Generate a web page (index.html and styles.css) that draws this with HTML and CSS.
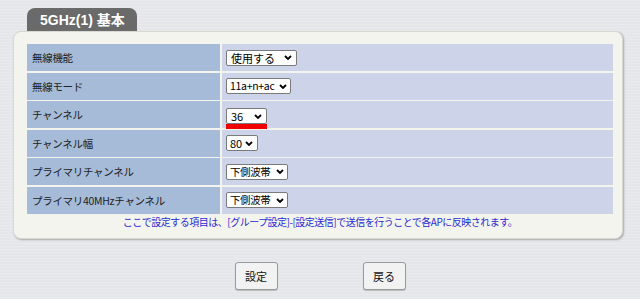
FILE: index.html
```html
<!DOCTYPE html>
<html lang="ja">
<head>
<meta charset="utf-8">
<title>5GHz(1) 基本</title>
<link rel="stylesheet" href="styles.css">
</head>
<body>
<div class="page">
  <div class="tab">5GHz(1) 基本</div>
  <div class="panel">
    <div class="grid">
      <div class="lbl">無線機能</div>
      <div class="val"><span class="sel w71"><span>使用する</span><svg class="chev" viewBox="0 0 8 5" width="8" height="5"><path d="M1 1 L4 4 L7 1" fill="none" stroke="#000" stroke-width="1.8"/></svg></span></div>
      <div class="lbl">無線モード</div>
      <div class="val"><span class="sel w65"><span class="narrow">11a+n+ac</span><svg class="chev" viewBox="0 0 8 5" width="8" height="5"><path d="M1 1 L4 4 L7 1" fill="none" stroke="#000" stroke-width="1.8"/></svg></span></div>
      <div class="lbl">チャンネル</div>
      <div class="val"><span class="stack"><span class="sel w41"><span>36</span><svg class="chev" viewBox="0 0 8 5" width="8" height="5"><path d="M1 1 L4 4 L7 1" fill="none" stroke="#000" stroke-width="1.8"/></svg></span><span class="redbar"></span></span></div>
      <div class="lbl">チャンネル幅</div>
      <div class="val"><span class="sel w32"><span>80</span><svg class="chev" viewBox="0 0 8 5" width="8" height="5"><path d="M1 1 L4 4 L7 1" fill="none" stroke="#000" stroke-width="1.8"/></svg></span></div>
      <div class="lbl">プライマリチャンネル</div>
      <div class="val"><span class="sel w62"><span class="kanji">下側波帯</span><svg class="chev" viewBox="0 0 8 5" width="8" height="5"><path d="M1 1 L4 4 L7 1" fill="none" stroke="#000" stroke-width="1.8"/></svg></span></div>
      <div class="lbl">プライマリ40MHzチャンネル</div>
      <div class="val"><span class="sel w62"><span class="kanji">下側波帯</span><svg class="chev" viewBox="0 0 8 5" width="8" height="5"><path d="M1 1 L4 4 L7 1" fill="none" stroke="#000" stroke-width="1.8"/></svg></span></div>
    </div>
    <p class="note">ここで設定する項目は、[グループ設定]-[設定送信]で送信を行うことで各APに反映されます。</p>
  </div>
  <div class="buttons">
    <button class="btn">設定</button>
    <button class="btn">戻る</button>
  </div>
</div>
</body>
</html>
```
FILE: styles.css
```css
html, body {
  margin: 0;
  padding: 0;
}
body {
  width: 640px;
  height: 299px;
  overflow: hidden;
  font-family: "Noto Sans CJK JP", "Liberation Sans", sans-serif;
  background-color: #e5e7ea;
  background-image: repeating-linear-gradient(to bottom, #e8eaed 0px, #e8eaed 1px, #e1e3e6 2px, #e6e8eb 3px);
  color: #222;
}
.page {
  padding-top: 8px;
}
.tab {
  margin-left: 27px;
  width: 110px;
  height: 23px;
  box-sizing: border-box;
  padding-left: 13px;
  background: #6a6a6a;
  border-radius: 8px 8px 0 0;
  color: #fff;
  font-family: "Liberation Sans", "Noto Sans CJK JP", sans-serif;
  font-weight: bold;
  font-size: 14px;
  line-height: 24px;
}
.panel {
  margin-left: 13px;
  width: 610px;
  height: 208px;
  box-sizing: border-box;
  background: #f4f4ee;
  border: 1px solid #d8d8d2;
  border-radius: 8px;
  box-shadow: 1px 1px 2px #a8a8a8;
  padding: 12px 0 0 13px;
}
.grid {
  width: 586px;
  display: grid;
  grid-template-columns: 193px 1fr;
  grid-auto-rows: 27px;
  column-gap: 2px;
  row-gap: 1.5px;
  background: #f4f4ee;
}
.lbl {
  background: #a5bbd8;
  font-size: 10.5px;
  letter-spacing: -0.3px;
  padding-left: 5px;
  display: flex;
  align-items: center;
  color: #222;
}
.val {
  background: #cdd3e8;
  padding-left: 4px;
  display: flex;
  align-items: center;
}
.sel {
  height: 16px;
  box-sizing: border-box;
  background: #fff;
  border: 1px solid #7a7a7a;
  border-radius: 2px;
  display: flex;
  align-items: center;
  justify-content: space-between;
  padding: 0 4px 0 4px;
  font-size: 11px;
  color: #000;
  line-height: 14px;
  white-space: nowrap;
}
.narrow {
  font-size: 10.5px;
  letter-spacing: -0.3px;
}
.kanji {
  font-size: 10.5px;
  letter-spacing: -0.4px;
}
.chev {
  flex: none;
  margin-left: 2px;
}
.w71 { width: 71px; }
.w65 { width: 65px; padding-left: 3px; padding-right: 3px; }
.w41 { width: 41px; }
.w32 { width: 32px; padding-left: 3px; }
.w62 { width: 62px; padding-left: 3px; padding-right: 3px; }
.stack {
  display: flex;
  flex-direction: column;
  margin-top: 8px;
}
.redbar {
  width: 41px;
  height: 5px;
  background: #f00000;
}
.note {
  margin: 1px 0 0 0;
  width: 586px;
  text-align: center;
  font-size: 10px;
  letter-spacing: -0.5px;
  color: #2b2bd0;
  line-height: 14px;
}
.buttons {
  display: flex;
  justify-content: center;
  gap: 85px;
  margin-top: 23px;
}
.btn {
  width: 43px;
  height: 28px;
  box-sizing: border-box;
  background: #f2f2f2;
  border: 1px solid #9a9a9a;
  border-radius: 3px;
  box-shadow: 0 1px 1px #b8b8b8;
  font-family: "Noto Sans CJK JP", sans-serif;
  font-size: 11px;
  color: #111;
  padding: 0;
}
```
